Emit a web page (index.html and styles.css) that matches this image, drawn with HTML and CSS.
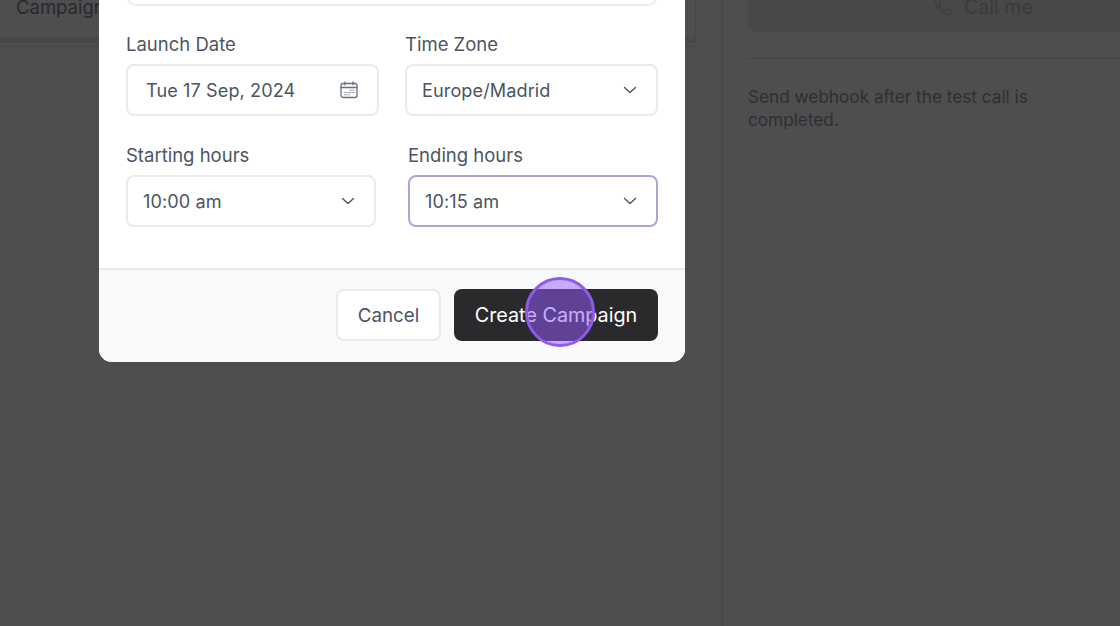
FILE: index.html
```html
<!DOCTYPE html>
<html lang="en">
<head>
  <meta charset="UTF-8">
  <meta name="viewport" content="width=device-width, initial-scale=1.0">
  <title>Create Campaign</title>
  <link rel="stylesheet" href="styles.css">
</head>
<body>
  <div class="page">
    <main class="main">
      <div class="tabs">
        <div class="tabs-row">
          <span class="tab">Campaigns</span>
        </div>
        <div class="tabs-band"></div>
      </div>
    </main>
    <aside class="side">
      <button class="call-button">
        <svg class="call-icon" width="20" height="20" viewBox="0 0 24 24" fill="none" stroke="currentColor" stroke-width="1.400" stroke-linecap="round" stroke-linejoin="round">
          <path d="M3 3.500c0-.6.5-1 1-1h3.200c.5 0 .9.3 1 .8l.8 3.600c.1.400 0 .8-.3 1L7 9.400c1.300 3.300 4.200 6.200 7.600 7.600l1.500-1.700c.3-.3.7-.4 1-.3l3.600.8c.5.1.8.5.8 1V20c0 .6-.5 1-1 1C10.500 21 3 13.500 3 3.500z"/>
        </svg>
        Call me
      </button>
      <hr class="side-line">
      <p class="side-text">Send webhook after the test call is completed.</p>
    </aside>
  </div>

  <div class="modal">
    <div class="modal-body">
      <div class="cut-field"></div>
      <div class="form-row">
        <div class="field date-field">
          <label>Launch Date</label>
          <div class="input date-input">
            <span>Tue 17 Sep, 2024</span>
            <svg width="20" height="20" viewBox="0 0 20 20" fill="none" stroke="#667085" stroke-width="1.300" stroke-linecap="round">
              <rect x="2" y="3.500" width="16" height="14" rx="2"/>
              <path d="M2 7.500h16M6 1.800v3M14 1.800v3"/>
              <path d="M10.500 10.200h4.500M5 12.500h10M5 14.800h6" stroke="#a3abb8" stroke-width="1"/>
            </svg>
          </div>
        </div>
        <div class="field zone-field">
          <label>Time Zone</label>
          <div class="input select-input">
            <span>Europe/Madrid</span>
            <svg width="14" height="8" viewBox="0 0 14 8" fill="none" stroke="#4b5563" stroke-width="1.400" stroke-linecap="round" stroke-linejoin="round"><path d="M1.500 1.500 7 6.500l5.500-5"/></svg>
          </div>
        </div>
      </div>
      <div class="form-row hours-row">
        <div class="field start-field">
          <label>Starting hours</label>
          <div class="input select-input">
            <span>10:00 am</span>
            <svg width="14" height="8" viewBox="0 0 14 8" fill="none" stroke="#4b5563" stroke-width="1.400" stroke-linecap="round" stroke-linejoin="round"><path d="M1.500 1.500 7 6.500l5.500-5"/></svg>
          </div>
        </div>
        <div class="field end-field">
          <label>Ending hours</label>
          <div class="input select-input focused">
            <span>10:15 am</span>
            <svg width="14" height="8" viewBox="0 0 14 8" fill="none" stroke="#4b5563" stroke-width="1.400" stroke-linecap="round" stroke-linejoin="round"><path d="M1.500 1.500 7 6.500l5.500-5"/></svg>
          </div>
        </div>
      </div>
    </div>
    <div class="modal-footer">
      <button class="btn btn-cancel">Cancel</button>
      <button class="btn btn-create">Create Campaign</button>
    </div>
  </div>

  <div class="click-dot"></div>
</body>
</html>
```

FILE: styles.css
```css
* {
  box-sizing: border-box;
}
html, body {
  margin: 0;
  padding: 0;
  height: 100%;
  overflow: hidden;
}
body {
  background: #4e4e4e;
  color: #2f3138;
  font-family: Inter, "Noto Sans", sans-serif;
  font-size: 18.500px;
}
.page {
  display: flex;
  height: 626px;
}
.main {
  width: 723px;
  border-right: 1px solid #464646;
  flex: none;
}
.tabs {
  width: 696px;
  height: 47px;
  border-bottom: 1px solid #484848;
}
.tabs-row {
  height: 37px;
  padding-left: 16px;
  border-right: 1px solid #474747;
  line-height: 14px;
}
.tab {
  color: #26282e;
}
.tabs-band {
  height: 6px;
  background: #484848;
  border-right: 1px solid #474747;
}
.side {
  flex: 1;
  padding-left: 25px;
  min-width: 0;
}
.call-button {
  display: flex;
  align-items: center;
  justify-content: center;
  gap: 11px;
  width: 100%;
  height: 32px;
  padding: 0 0 18px 98px;
  border: 0;
  border-radius: 0 0 0 8px;
  background: #484848;
  color: #393a3d;
  font: inherit;
  font-size: 19.600px;
}
.call-icon {
  color: #3c3d40;
}
.side-line {
  width: 100%;
  height: 1px;
  margin: 26px 0 0;
  border: 0;
  background: #434343;
}
.side-text {
  width: 320px;
  margin: 26px 0 0;
  color: #2c2e36;
  font-size: 17.200px;
  line-height: 23px;
}
.modal {
  position: absolute;
  left: 99px;
  top: -60px;
  width: 586px;
  height: 422px;
  display: flex;
  flex-direction: column;
  background: #fff;
  border-radius: 0 0 13px 13px;
  overflow: hidden;
}
.modal-body {
  flex: 1;
  padding: 0 27px;
}
.cut-field {
  height: 66px;
  border: 2px solid #e8eaed;
  border-top: 0;
  border-radius: 0 0 10px 10px;
}
.form-row {
  display: flex;
  justify-content: space-between;
  margin-top: 26px;
}
.hours-row {
  margin-top: 27px;
}
.field label {
  display: block;
  height: 24px;
  margin-bottom: 8px;
  color: #4b5563;
  line-height: 24px;
}
.date-field {
  width: 253px;
}
.zone-field {
  width: 253px;
}
.start-field {
  width: 250px;
}
.end-field {
  width: 250px;
}
.input {
  display: flex;
  align-items: center;
  justify-content: space-between;
  height: 52px;
  border: 2px solid #e8eaed;
  border-radius: 8px;
  color: #4b5563;
  font-size: 18.100px;
  letter-spacing: 0.1px;
}
.date-input {
  padding: 0 18px 0 18px;
}
.select-input {
  padding: 0 19px 0 15px;
}
.focused {
  border-color: #b3a3da;
}
.modal-footer {
  display: flex;
  justify-content: flex-end;
  gap: 13px;
  height: 94px;
  padding: 19px 27px 0;
  background: #f9fafb;
  border-top: 2px solid #e8eaed;
}
.btn {
  height: 52px;
  border-radius: 8px;
  font: inherit;
}
.btn-cancel {
  width: 105px;
  background: #fff;
  border: 2px solid #e8eaed;
  color: #4b5563;
  font-size: 18.800px;
}
.btn-create {
  width: 204px;
  background: #2a2a2c;
  border: 0;
  color: #fff;
  font-size: 19.750px;
}
.click-dot {
  position: absolute;
  left: 525px;
  top: 277px;
  width: 70px;
  height: 70px;
  border-radius: 50%;
  background: rgba(148, 90, 255, 0.5);
  border: 3px solid #8b5ceb;
}
```
